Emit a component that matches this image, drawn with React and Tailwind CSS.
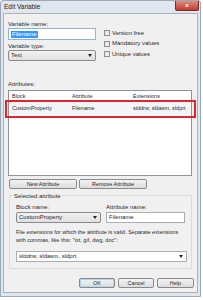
import React from 'react';

const Check = ({ label }) => (
  <div className="flex items-center h-[10.5px]">
    <div className="w-[6px] h-[6px] border border-[#8e8f8f] bg-gradient-to-br from-[#dcdcdc] to-[#f8f8f8]" />
    <span className="ml-[2px]">{label}</span>
  </div>
);

const Arrow = () => (
  <svg width="4" height="3" viewBox="0 0 4 3" className="ml-auto mr-[3px]">
    <path d="M0 0H4L2 3Z" fill="#222" />
  </svg>
);

const Btn = ({ children, className = '' }) => (
  <div
    className={`h-[10px] flex items-center justify-center rounded-[2px] border border-[#8a8a8a] bg-gradient-to-b from-[#f3f3f3] to-[#dcdcdc] text-[5.5px] ${className}`}
  >
    {children}
  </div>
);

export default function App() {
  return (
    <div className="w-[203px] h-[300px] bg-white font-['Liberation_Sans',sans-serif] text-[6px] leading-[7px] text-[#2a2a2a]">
      <div className="w-[201px] h-[297px] flex flex-col border border-[#9aa8b8] rounded-t-[3px] bg-[#dfe6ee]">
        {/* Title bar */}
        <div className="h-[12px] flex items-start">
          <span className="ml-[3px] mt-[2px] text-[6.5px] leading-[8px] text-[#222]">Edit Variable</span>
          <div className="ml-auto mr-[1px] w-[24px] h-[10px] rounded-b-[2px] border border-[#7b2a24] border-t-0 bg-gradient-to-b from-[#e08a80] to-[#c0392f] flex items-center justify-center text-white text-[6px] font-bold">
            x
          </div>
        </div>

        {/* Client area */}
        <div className="mx-[2px] mb-[3px] flex-1 bg-[#f0f0f0] border border-[#a8b3bf] flex flex-col pl-[4px] pr-[3px] relative">
          {/* Top section */}
          <div className="flex pt-[7px]">
            <div className="w-[88px] flex flex-col">
              <span>Variable name:</span>
              <div className="h-[12px] bg-white border border-[#8fb2d6] flex items-center pl-[2px]">
                <span className="bg-[#3399ff] text-white px-[1px]">Filename</span>
              </div>
              <span className="mt-[3px]">Variable type:</span>
              <div className="h-[11px] border border-[#8a8a8a] rounded-[2px] bg-gradient-to-b from-[#f2f2f2] to-[#e0e0e0] flex items-center pl-[2px]">
                <span>Text</span>
                <Arrow />
              </div>
            </div>
            <div className="ml-[8px] pt-[7px] flex flex-col">
              <Check label="Version free" />
              <Check label="Mandatory values" />
              <Check label="Unique values" />
            </div>
          </div>

          {/* Attributes */}
          <span className="mt-[20px]">Attributes:</span>
          <div className="mt-[2px] w-[184px] h-[86px] bg-white border border-[#8f949a] flex flex-col text-[5.5px]">
            <div className="h-[11px] flex items-center border-b border-[#e5e5e5]">
              <span className="w-[63px] pl-[3px]">Block</span>
              <span className="w-[61px]">Attribute</span>
              <span>Extensions</span>
            </div>
            <div className="h-[12px] flex items-center bg-[#f2f4f7]">
              <span className="w-[63px] pl-[3px]">CustomProperty</span>
              <span className="w-[61px]">Filename</span>
              <span>slddrw, sldasm, sldprt</span>
            </div>
          </div>
          <div className="absolute left-[1px] top-[86px] w-[191px] h-[18px] border-2 border-[#e3242b]" />

          {/* Attribute buttons */}
          <div className="mt-[3px] ml-[1px] flex gap-[2px]">
            <Btn className="w-[68px]">New Attribute</Btn>
            <Btn className="w-[68px]">Remove Attribute</Btn>
          </div>

          {/* Group box */}
          <div className="mt-[6px] ml-[1px] w-[183px] h-[74px] border border-[#d5dbe2] rounded-[2px] relative flex flex-col px-[6px]">
            <span className="absolute left-[3px] top-[-3px] px-[1px] bg-[#f0f0f0]">Selected attribute</span>
            <div className="flex mt-[8px]">
              <div className="w-[86px] flex flex-col">
                <span>Block name:</span>
                <div className="mt-[1px] h-[11px] border border-[#8a8a8a] rounded-[2px] bg-gradient-to-b from-[#f2f2f2] to-[#e0e0e0] flex items-center pl-[2px]">
                  <span>CustomProperty</span>
                  <Arrow />
                </div>
              </div>
              <div className="ml-[5px] w-[80px] flex flex-col">
                <span>Attribute name:</span>
                <div className="mt-[1px] h-[11px] bg-white border border-[#abadb3] flex items-center pl-[2px]">
                  <span>Filename</span>
                </div>
              </div>
            </div>
            <p className="mt-[5px] leading-[8px] text-[5.5px]">
              File extensions for which the attribute is valid. Separate extensions with commas, like this: "txt, gif, dwg, doc":
            </p>
            <div className="mt-[7px] w-[171px] h-[11px] bg-white border border-[#abadb3] flex items-center pl-[2px]">
              <span>slddrw, sldasm, sldprt</span>
              <Arrow />
            </div>
          </div>

          {/* Bottom buttons */}
          <div className="mt-[9px] flex justify-end gap-[3px]">
            <Btn className="w-[36px] border-[#3c7fb1] shadow-[inset_0_0_0_1px_#a9d6f5]">OK</Btn>
            <Btn className="w-[36px]">Cancel</Btn>
            <Btn className="w-[37px]">Help</Btn>
          </div>
        </div>
      </div>
    </div>
  );
}
